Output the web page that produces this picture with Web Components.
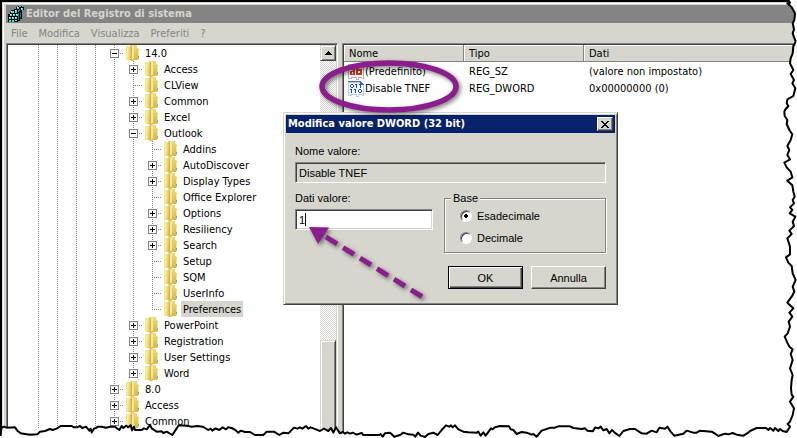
<!DOCTYPE html>
<html lang="it">
  <head>
    <meta charset="UTF-8" />
    <meta name="viewport" content="width=device-width, initial-scale=1.0" />
    <title>Editor del Registro di sistema</title>
    <style>
      html {
        --face: #d6d6ce;
        --shade: #848484;
        --dark: #424142;
        --navy: #08216b;
        --mark: #8c1d8c;
        --ui: 'DejaVu Sans Condensed', 'Noto Sans', sans-serif;
        --form: 'Liberation Sans', Arial, sans-serif;
      }

      body {
        margin: 0;
        height: 100vh;
        overflow: hidden;
        position: relative;
        background: #fff;
        color: #000;
        font: 11px/16px var(--ui);
      }
    </style>
  </head>
  <body>
    <template id="reg-window">
      <style>
        :host {
          display: flex;
          flex-direction: column;
          box-sizing: border-box;
          height: 100%;
          padding: 2px;
          border: solid #000;
          border-width: 2px 0 0 2px;
          background: var(--face);
          box-shadow: inset 1px 1px var(--face), inset 2px 2px #fff;
        }
        header {
          display: flex;
          align-items: center;
          gap: 2px;
          height: 18px;
          margin: 1px 0 0 2px;
          padding-left: 2px;
          background: var(--shade);
          color: var(--face);
        }
        h1 {
          margin: 0;
          font: bold 11px/16px var(--ui);
        }
        nav {
          display: flex;
          height: 20px;
          margin-left: 2px;
        }
        main {
          flex: 1;
          min-height: 0;
          display: grid;
          grid-template-columns: 332px 1fr;
          gap: 4px;
          margin-left: 2px;
        }
      </style>
      <header>
        <svg width="16" height="16" shape-rendering="crispEdges">
          <path d="M3 4h3V3h4v3h2v9h-2v1H0V8h2z" fill="#000" />
          <path d="M8 1h2V0h4v1h2v3h-2v2h-3V4H8z" fill="#000" />
          <path d="M12 6h2v7h-2z" fill="#000" />
          <path d="M3 5h3v2H3zM7 4h2v3H7zM2 8h2v2H2zM5 8h2v2H5zM8 8h2v2H8zM1 11h2v2H1zM4 11h2v2H4zM7 11h2v2H7zM1 14h2v2H1zM4 14h2v2H4zM7 14h2v1H7zM9 1h2v2H9zM13 2h2v2h-2zM11 0h2v1h-2z" fill="#21e7e7" />
          <path d="M10 7h1v7h-1zM12 7h1v5h-1zM11 3h1v2h-1z" fill="#008284" />
          <path d="M3 5h1v1H3zM7 4h1v1H7zM2 8h1v1H2zM5 8h1v1H5zM8 8h1v1H8zM1 11h1v1H1zM4 11h1v1H4zM7 11h1v1H7zM9 1h1v1H9zM13 2h1v1h-1z" fill="#fff" />
        </svg>
        <h1><slot name="title"></slot></h1>
      </header>
      <nav><slot name="menu"></slot></nav>
      <main><slot></slot></main>
    </template>

    <template id="reg-menu">
      <style>
        :host {
          display: block;
        }
        button {
          height: 20px;
          padding: 1px 6px 0 5px;
          border: 0;
          background: none;
          color: var(--shade);
          font: inherit;
        }
      </style>
      <button type="button"><slot></slot></button>
    </template>

    <template id="reg-tree">
      <style>
        :host {
          display: grid;
          grid-template-columns: 1fr 16px;
          min-height: 0;
          box-sizing: border-box;
          overflow: hidden;
          border: 1px solid;
          border-color: var(--shade) #fff #fff var(--shade);
          padding: 1px;
          background: #fff;
          box-shadow: inset 1px 1px var(--dark), inset -1px -1px var(--face);
        }
        .nodes {
          overflow: hidden;
          padding-left: 21px;
        }
        .bar {
          display: grid;
          grid-template-rows: 16px 279px 1fr;
          background: repeating-conic-gradient(var(--face) 0 25%, #fff 0 50%) 0 0 / 2px 2px;
        }
        .bar button,
        .thumb {
          display: grid;
          place-items: center;
          padding: 0;
          border: 1px solid;
          border-color: var(--face) var(--dark) var(--dark) var(--face);
          background: var(--face);
          box-shadow: inset 1px 1px #fff, inset -1px -1px var(--shade);
        }
        .thumb {
          grid-row: 3;
        }
      </style>
      <div class="nodes" role="tree"><slot></slot></div>
      <div class="bar">
        <button type="button" aria-label="Su">
          <svg width="7" height="4" shape-rendering="crispEdges"><path d="M3 0h1v1h1v1h1v1h1v1H0V3h1V2h1V1h1z" /></svg>
        </button>
        <div class="thumb"></div>
      </div>
    </template>

    <template id="reg-node">
      <style>
        :host {
          display: flex;
          height: 16px;
          white-space: nowrap;
        }
        .line {
          width: 19px;
          background: repeating-linear-gradient(var(--shade) 0 1px, transparent 1px 2px) 9px 0 / 1px 100% no-repeat;
        }
        .joint {
          display: flex;
          align-items: center;
          padding-left: 5px;
          box-sizing: border-box;
          background:
            repeating-linear-gradient(var(--shade) 0 1px, transparent 1px 2px) 9px 0 / 1px 100% no-repeat,
            repeating-linear-gradient(90deg, var(--shade) 0 1px, transparent 1px 2px) 9px 8px / 10px 1px no-repeat;
        }
        :host([last]) .joint {
          background-size: 1px 9px, 10px 1px;
        }
        .box {
          display: none;
          margin-top: 1px;
        }
        :host([open]) .box,
        :host([closed]) .box {
          display: block;
        }
        :host([open]) .plus {
          display: none;
        }
        .label {
          box-sizing: border-box;
          height: 16px;
          margin-left: 3px;
          padding: 1px 2px 0;
          line-height: 16px;
        }
        :host([selected]) .label {
          background: var(--face);
        }
      </style>
      <span class="line joint">
        <svg class="box" width="9" height="9" shape-rendering="crispEdges">
          <path d="M0 0h9v9H0z" fill="#848284" />
          <path d="M1 1h7v7H1z" fill="#fff" />
          <path d="M2 4h5v1H2z" />
          <path class="plus" d="M4 2h1v5H4z" />
        </svg>
      </span>
      <svg width="16" height="16">
        <defs>
          <linearGradient id="flap" x2="1" y2="0.200">
            <stop offset="0" stop-color="#f3dd7b" />
            <stop offset="0.400" stop-color="#faeda2" />
            <stop offset="1" stop-color="#e3c358" />
          </linearGradient>
          <linearGradient id="back" x2="0.300" y2="1">
            <stop offset="0" stop-color="#f5e184" />
            <stop offset="1" stop-color="#dcb948" />
          </linearGradient>
        </defs>
        <path d="M2 1h4V0h7v3l2 1v9l-1 2h-4l-1 1H7l-1-1H2z" fill="url(#back)" />
        <path d="M2 1h5v13l-1 1H2z" fill="url(#flap)" />
        <path d="M7 1h1v13l-1 1z" fill="#d6b248" />
        <path d="M8 1h2v12l-2 2z" fill="#f8e99c" />
        <path d="M14 5h1v7h-1z" fill="#f7e690" />
        <path d="M14 11h1v2h-1z" fill="#5bb0d8" />
      </svg>
      <span class="label" role="treeitem"><slot></slot></span>
    </template>

    <template id="reg-values">
      <style>
        :host {
          display: block;
          min-width: 0;
          min-height: 0;
          border: 1px solid;
          border-color: var(--shade) #fff #fff var(--shade);
          padding: 1px;
          background: #fff;
          box-shadow: inset 1px 1px var(--dark);
        }
        table {
          width: 100%;
          table-layout: fixed;
          border-collapse: separate;
          border-spacing: 0;
        }
        col {
          width: 120px;
        }
        col:last-child {
          width: auto;
        }
        th {
          height: 16px;
          padding: 0 0 0 5px;
          background: var(--face);
          border: solid var(--shade);
          border-width: 0 1px 1px 0;
          box-shadow: inset 1px 1px #fff;
          font-weight: normal;
          line-height: 15px;
          text-align: left;
        }
        td {
          height: 17px;
          padding: 0 0 0 5px;
          line-height: 17px;
          white-space: nowrap;
        }
        td:first-child {
          padding-left: 4px;
        }
        tbody::before {
          content: '';
          display: block;
          height: 1px;
        }
        .name {
          display: flex;
          align-items: center;
          gap: 1px;
        }
      </style>
      <table>
        <colgroup><col /><col /><col /></colgroup>
        <thead>
          <tr><th>Nome</th><th>Tipo</th><th>Dati</th></tr>
        </thead>
        <tbody>
          <tr>
            <td>
              <span class="name">
                <svg width="16" height="16" shape-rendering="crispEdges">
                  <path d="M0 0h12l4 4v11h-2v-1h-3v2H8v-2H4v1H0z" fill="#b5b2b5" />
                  <path d="M1 1h11l3 3v10h-1v-1h-4v2H9v-2H3v1H1z" fill="#f7f3f7" />
                  <path d="M2 5h5v6H2V7h3V6H2zM4 8v2h1V8zM8 3h2v2h4v6H8zM10 7v2h2V7z" fill="#ce3c21" fill-rule="evenodd" />
                </svg>
                (Predefinito)
              </span>
            </td>
            <td>REG_SZ</td>
            <td>(valore non impostato)</td>
          </tr>
          <tr>
            <td>
              <span class="name">
                <svg width="16" height="16" shape-rendering="crispEdges">
                  <path d="M0 0h12l4 4v11h-2v-1h-3v2H8v-2H4v1H0z" fill="#bdcbe7" />
                  <path d="M1 2h11l3 3v9h-1v-1h-4v2H9v-2H3v1H1z" fill="#f7fbff" />
                  <path d="M0 0h12l4 4h-4V1H0z" fill="#4269bd" />
                  <path d="M3 3h2v1H3zM2 4h1v2H2zM5 4h1v2H5zM3 6h2v1H3z" fill="#1049de" />
                  <path d="M8 3h1v4H8zM7 3h1v1H7zM12 3h1v4h-1zM11 3h1v1h-1z" fill="#1049de" />
                  <path d="M3 8h1v4H3zM2 8h1v1H2zM7 8h1v4H7zM6 8h1v1H6z" fill="#1049de" />
                  <path d="M11 8h2v1h-2zM10 9h1v2h-1zM13 9h1v2h-1zM11 11h2v1h-2z" fill="#1049de" />
                </svg>
                Disable TNEF
              </span>
            </td>
            <td>REG_DWORD</td>
            <td>0x00000000 (0)</td>
          </tr>
        </tbody>
      </table>
    </template>

    <template id="reg-dialog">
      <style>
        :host {
          position: absolute;
          left: 283px;
          top: 112px;
          width: 335px;
          box-sizing: border-box;
          padding: 2px;
          border: 1px solid;
          border-color: var(--face) var(--dark) var(--dark) var(--face);
          background: var(--face);
          box-shadow: inset 1px 1px #fff, inset -1px -1px var(--shade);
          font: 11px/14px var(--form);
        }
        header {
          display: flex;
          align-items: center;
          justify-content: space-between;
          height: 18px;
          padding: 0 2px;
          background: var(--navy);
          color: #fff;
        }
        h2 {
          margin: 0;
          font: bold 11px/16px var(--ui);
        }
        button {
          border: 1px solid;
          border-color: #fff var(--dark) var(--dark) #fff;
          padding: 0;
          background: var(--face);
          box-shadow: inset -1px -1px var(--shade);
          color: #000;
          font: inherit;
        }
        .close {
          display: grid;
          place-items: center;
          width: 16px;
          height: 14px;
        }
        form {
          display: grid;
          grid-template-columns: 138px 1fr;
          column-gap: 11px;
          padding: 11px 9px 13px;
        }
        .field {
          display: flex;
          flex-direction: column;
          gap: 4px;
        }
        .wide {
          grid-column: 1 / -1;
          margin-bottom: 8px;
        }
        .entry {
          position: relative;
          display: flex;
        }
        input[type='text'] {
          box-sizing: border-box;
          width: 100%;
          height: 21px;
          padding: 0 3px;
          border: 1px solid;
          border-color: var(--shade) #fff #fff var(--shade);
          box-shadow: inset 1px 1px var(--dark), inset -1px -1px var(--face);
          background: #fff;
          color: #000;
          font: inherit;
          outline: 0;
        }
        input[readonly] {
          background: var(--face);
        }
        .caret {
          position: absolute;
          left: 10px;
          top: 4px;
          width: 1px;
          height: 13px;
          background: #000;
        }
        fieldset {
          display: flex;
          flex-direction: column;
          gap: 8px;
          min-width: 0;
          margin: 0;
          padding: 4px 15px 7px;
          border: 1px solid var(--shade);
          box-shadow: 1px 1px #fff, inset 1px 1px #fff;
        }
        legend {
          margin-left: -9px;
          padding: 0 2px;
          background: var(--face);
        }
        .choice {
          display: flex;
          align-items: center;
          gap: 5px;
        }
        input[type='radio'] {
          appearance: none;
          box-sizing: border-box;
          width: 12px;
          height: 12px;
          margin: 0;
          border: 1px solid;
          border-color: var(--shade) #fff #fff var(--shade);
          border-radius: 50%;
          background: #fff;
          box-shadow: inset 1px 1px var(--dark);
        }
        input[type='radio']:checked {
          background: radial-gradient(circle, #000 0 2px, #fff 2px);
        }
        footer {
          grid-column: 1 / -1;
          display: flex;
          justify-content: flex-end;
          gap: 8px;
          margin-top: 13px;
        }
        footer button {
          width: 75px;
          height: 23px;
        }
        .default {
          border-color: #000;
          box-shadow: inset 1px 1px #fff, inset -1px -1px var(--dark), inset -2px -2px var(--shade);
        }
      </style>
      <header>
        <h2><slot></slot></h2>
        <button class="close" type="button" aria-label="Chiudi">
          <svg width="8" height="7" shape-rendering="crispEdges"><path d="M0 0h2v1h1v1h2V1h1V0h2v1H7v1H6v1H5v1h1v1h1v1h1v1H6V6H5V5H3v1H2v1H0V6h1V5h1V4h1V3H2V2H1V1H0z" /></svg>
        </button>
      </header>
      <form>
        <div class="field wide">
          <label for="name">Nome valore:</label>
          <div class="entry">
            <input id="name" type="text" value="Disable TNEF" readonly />
          </div>
        </div>
        <div class="field">
          <label for="data">Dati valore:</label>
          <div class="entry">
            <input id="data" type="text" value="1" />
            <span class="caret"></span>
          </div>
        </div>
        <fieldset>
          <legend>Base</legend>
          <div class="choice">
            <input id="hex" type="radio" name="base" checked />
            <label for="hex">Esadecimale</label>
          </div>
          <div class="choice">
            <input id="dec" type="radio" name="base" />
            <label for="dec">Decimale</label>
          </div>
        </fieldset>
        <footer>
          <button class="default" type="button">OK</button>
          <button type="button">Annulla</button>
        </footer>
      </form>
    </template>

    <template id="reg-marks">
      <style>
        :host {
          position: absolute;
          inset: 0;
          pointer-events: none;
        }
        svg {
          display: block;
          filter: drop-shadow(2px 2px 2px rgba(0, 0, 0, 0.5));
        }
      </style>
      <svg width="480" height="320" fill="none" stroke="var(--mark)">
        <ellipse cx="389" cy="86.500" rx="67" ry="23.500" stroke-width="5.500" />
        <path d="m326 237 99 61.500" stroke-width="5" stroke-dasharray="13 7" />
        <path d="m309 227 20 .5-11 16.500z" fill="var(--mark)" stroke="none" />
      </svg>
    </template>

    <template id="torn-edge">
      <style>
        :host {
          position: absolute;
          inset: 0;
          pointer-events: none;
        }
        svg {
          display: block;
          width: 100%;
          height: 100%;
        }
      </style>
      <svg viewBox="0 0 2391 1314" preserveAspectRatio="none">
        <path class="paper" fill="#fff" />
        <path class="rip" fill="none" stroke="#000" stroke-width="6" stroke-linejoin="round" />
      </svg>
    </template>

    <reg-window>
      <span slot="title">Editor del Registro di sistema</span>
      <reg-menu slot="menu">File</reg-menu>
      <reg-menu slot="menu">Modifica</reg-menu>
      <reg-menu slot="menu">Visualizza</reg-menu>
      <reg-menu slot="menu">Preferiti</reg-menu>
      <reg-menu slot="menu">?</reg-menu>
      <reg-tree>
        <reg-node level="4" open>14.0</reg-node>
        <reg-node level="5" closed>Access</reg-node>
        <reg-node level="5">CLView</reg-node>
        <reg-node level="5" closed>Common</reg-node>
        <reg-node level="5" closed>Excel</reg-node>
        <reg-node level="5" open>Outlook</reg-node>
        <reg-node level="6">Addins</reg-node>
        <reg-node level="6" closed>AutoDiscover</reg-node>
        <reg-node level="6" closed>Display Types</reg-node>
        <reg-node level="6">Office Explorer</reg-node>
        <reg-node level="6" closed>Options</reg-node>
        <reg-node level="6" closed>Resiliency</reg-node>
        <reg-node level="6" closed>Search</reg-node>
        <reg-node level="6">Setup</reg-node>
        <reg-node level="6">SQM</reg-node>
        <reg-node level="6">UserInfo</reg-node>
        <reg-node level="6" last selected>Preferences</reg-node>
        <reg-node level="5" closed>PowerPoint</reg-node>
        <reg-node level="5" closed>Registration</reg-node>
        <reg-node level="5" closed>User Settings</reg-node>
        <reg-node level="5" closed last>Word</reg-node>
        <reg-node level="4" closed>8.0</reg-node>
        <reg-node level="4" closed>Access</reg-node>
        <reg-node level="4" closed>Common</reg-node>
      </reg-tree>
      <reg-values></reg-values>
    </reg-window>
    <reg-dialog>Modifica valore DWORD (32 bit)</reg-dialog>
    <reg-marks></reg-marks>
    <torn-edge></torn-edge>

    <script>
      class RegElement extends HTMLElement {
        constructor() {
          super();
          const template = document.getElementById(this.localName);
          this.attachShadow({ mode: 'open' }).appendChild(template.content.cloneNode(true));
        }
      }

      for (const name of ['reg-window', 'reg-menu', 'reg-tree', 'reg-values', 'reg-dialog', 'reg-marks']) {
        customElements.define(name, class extends RegElement {});
      }

      customElements.define(
        'reg-node',
        class extends RegElement {
          connectedCallback() {
            // one dotted guide for each ancestor
            const joint = this.shadowRoot.querySelector('.joint');
            for (let i = 0; i < Number(this.getAttribute('level')); i++) {
              const line = document.createElement('span');
              line.className = 'line';
              joint.before(line);
            }
          }
        }
      );

      // [x, y, points] stretches of the rip, from the top right corner down and back to the left
      const RIP = [
        [1590, 0, '775,0 780,8 772,10 785,22 795,40 793,60 788,70 792,88 788,100 797,125 790,140 788,160 782,175 780,190 790,210 782,222 792,240 787,250 796,265 790,288 772,298 770,310 775,318 765,330'],
        [2220, 300, '133,35 134,48 142,60 140,72 148,90 157,103 152,120 142,138 148,150 142,165 150,178 133,188 140,202 152,215 157,232 142,242 157,256 160,275 164,290 158,300 162,310 150,322 157,330 149,340 166,350 158,365 162,378 148,392 155,402 142,415 147,430 150,440 150,463 138,472 145,488 155,498 158,520 167,540 158,560 163,575 155,590 142,608 160,625 148,638 157,650 146,665 150,680 143,700 134,710 142,728 148,740 158,748 152,762 158,780 150,805 158,825 155,840 153,865 155,885 160,890 150,905 162,925 158,945 150,965 143,972 150,980'],
        [1020, 1200, '1340,96 1328,93 1320,87 1315,93 1305,84 1300,92 1290,84 1285,90 1278,84 1250,84 1230,93 1225,98 1210,107 1190,104 1178,99 1165,103 1155,101 1135,108 1125,101 1115,95 1080,92 1070,98 1060,98 1040,92 1030,101 1003,107 992,95 982,80 975,86 958,83 950,97 935,92 920,101 905,100 885,87 870,87 850,93 838,108 824,98 816,90 808,100 800,87 790,91 782,80 775,85 766,82 758,94 742,92 735,85 725,87 700,84 690,79 655,79 645,83 632,83 620,87 605,92 590,110 580,102 575,104 560,98 545,96 530,102 520,90 512,88 507,79 480,78 465,82 458,88 453,85 448,92 437,107 430,97 422,107 415,95 410,98 385,97 370,95 355,88 345,76 338,82 333,76 328,80 318,76 305,90 293,105 280,98 265,102 255,111 242,107 234,98 226,110 220,104 205,103 190,98 180,105 163,110 150,98 135,100 128,110 122,102 118,105 70,105 65,99 50,104 38,98 30,101 22,97 15,101 8,96 0,100'],
        [0, 1200, '1008,82 1000,98 993,84 985,93 972,86 960,93 940,85 932,82 925,86 918,78 907,86 900,82 892,86 882,83 865,100 850,98 838,105 822,95 800,95 790,105 765,105 750,96 735,96 722,92 715,98 706,90 695,84 684,82 678,88 668,82 658,90 647,85 637,92 632,86 625,90 608,80 592,78 575,80 560,77 536,76 528,88 517,105 500,95 490,99 485,94 470,95 456,86 450,75 440,88 432,85 425,90 405,90 402,80 396,91 392,76 385,82 378,77 370,84 365,78 358,90 352,86 345,80 330,80 318,83 305,80 293,80 288,84 282,86 275,97 272,86 268,92 258,80 247,84 240,78 232,82 222,82 215,78 182,78 170,86 158,90 150,87 135,93 120,95 112,103 90,104 75,102 62,100 52,92 45,82 20,83 12,80 4,84 2,108']
      ];

      customElements.define(
        'torn-edge',
        class extends RegElement {
          connectedCallback() {
            const points = RIP.flatMap(([x, y, list]) =>
              list.split(' ').map((pair) => {
                const [px, py] = pair.split(',').map(Number);
                return `${x + px} ${y + py}`;
              })
            );
            const line = 'M' + points.join('L');
            this.shadowRoot.querySelector('.rip').setAttribute('d', line);
            this.shadowRoot.querySelector('.paper').setAttribute('d', line + 'L0 1290V1314H2391V0Z');
          }
        }
      );
    </script>
  </body>
</html>
